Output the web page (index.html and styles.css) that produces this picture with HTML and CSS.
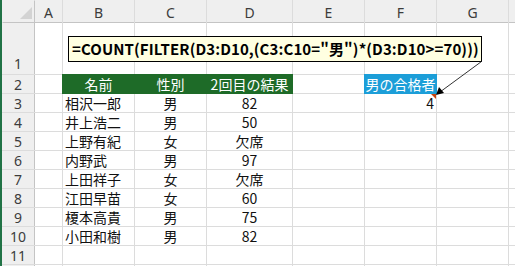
FILE: index.html
```html
<!DOCTYPE html>
<html lang="ja">
<head>
<meta charset="utf-8">
<link rel="stylesheet" href="styles.css">
</head>
<body>
<div class="app">
  <div class="stripe"></div>
  <div class="sheet">
    <div class="hdr corner"><svg width="12" height="12" viewBox="0 0 12 12"><polygon points="12,0 12,12 0,12" fill="#d3d3d3"/></svg></div>
    <div class="hdr col">A</div><div class="hdr col">B</div><div class="hdr col">C</div><div class="hdr col">D</div><div class="hdr col">E</div><div class="hdr col">F</div><div class="hdr col">G</div><div class="hdr col"></div>

    <div class="hdr row tall">1</div><div class="c"></div><div class="c"></div><div class="c"></div><div class="c"></div><div class="c"></div><div class="c"></div><div class="c"></div><div class="c"></div>

    <div class="hdr row">2</div><div class="c"></div><div class="c green ctr">名前</div><div class="c green ctr">性別</div><div class="c green ctr">2回目の結果</div><div class="c"></div><div class="c blue ctr">男の合格者</div><div class="c"></div><div class="c"></div>

    <div class="hdr row">3</div><div class="c"></div><div class="c left">相沢一郎</div><div class="c ctr">男</div><div class="c ctr">82</div><div class="c"></div><div class="c right note">4<span class="tri"></span></div><div class="c"></div><div class="c"></div>

    <div class="hdr row">4</div><div class="c"></div><div class="c left">井上浩二</div><div class="c ctr">男</div><div class="c ctr">50</div><div class="c"></div><div class="c"></div><div class="c"></div><div class="c"></div>

    <div class="hdr row">5</div><div class="c"></div><div class="c left">上野有紀</div><div class="c ctr">女</div><div class="c ctr">欠席</div><div class="c"></div><div class="c"></div><div class="c"></div><div class="c"></div>

    <div class="hdr row">6</div><div class="c"></div><div class="c left">内野武</div><div class="c ctr">男</div><div class="c ctr">97</div><div class="c"></div><div class="c"></div><div class="c"></div><div class="c"></div>

    <div class="hdr row">7</div><div class="c"></div><div class="c left">上田祥子</div><div class="c ctr">女</div><div class="c ctr">欠席</div><div class="c"></div><div class="c"></div><div class="c"></div><div class="c"></div>

    <div class="hdr row">8</div><div class="c"></div><div class="c left">江田早苗</div><div class="c ctr">女</div><div class="c ctr">60</div><div class="c"></div><div class="c"></div><div class="c"></div><div class="c"></div>

    <div class="hdr row">9</div><div class="c"></div><div class="c left">榎本高貴</div><div class="c ctr">男</div><div class="c ctr">75</div><div class="c"></div><div class="c"></div><div class="c"></div><div class="c"></div>

    <div class="hdr row">10</div><div class="c"></div><div class="c left">小田和樹</div><div class="c ctr">男</div><div class="c ctr">82</div><div class="c"></div><div class="c"></div><div class="c"></div><div class="c"></div>

    <div class="hdr row">11</div><div class="c"></div><div class="c"></div><div class="c"></div><div class="c"></div><div class="c"></div><div class="c"></div><div class="c"></div><div class="c"></div>

    <div class="hdr row"></div><div class="c"></div><div class="c"></div><div class="c"></div><div class="c"></div><div class="c"></div><div class="c"></div><div class="c"></div><div class="c"></div>
  </div>
  <div class="formula">=COUNT(FILTER(D3:D10,(C3:C10="男")*(D3:D10&gt;=70)))</div>
  <svg class="arrow" width="515" height="266" viewBox="0 0 515 266">
    <line x1="481.5" y1="61.5" x2="440" y2="92" stroke="#333" stroke-width="1"/>
    <polygon points="436,95 439,87 444,93" fill="#000"/>
  </svg>
</div>
</body>
</html>
```
FILE: styles.css
```css
html, body {
  margin: 0;
  padding: 0;
  background: #ffffff;
}
body {
  width: 515px;
  height: 266px;
  overflow: hidden;
  font-family: "Noto Sans CJK JP", "Noto Sans", sans-serif;
  font-size: 14px;
  color: #111;
}
.app {
  position: relative;
  display: flex;
  width: 515px;
  height: 266px;
  overflow: hidden;
}
.stripe {
  width: 2px;
  flex: none;
  background: #217346;
}
.sheet {
  display: grid;
  grid-template-columns: 32px 27px 71px 71px 85px 71px 71px 71px 8px;
  grid-template-rows: 22px 51px repeat(10, 18px) 10px;
  gap: 1px;
  background: #dcdcdc;
  align-self: flex-start;
}
.hdr {
  background: #efefef;
  color: #3c3c3c;
  font-family: "Noto Sans", "Noto Sans CJK JP", sans-serif;
  font-size: 14px;
  display: flex;
  justify-content: center;
  align-items: center;
  line-height: 1;
}
.col {
  padding-top: 3px;
  box-sizing: border-box;
  box-shadow: 0 1px 0 #c4c4c4;
}
.row {
  box-shadow: 1px 0 0 #c4c4c4;
  padding-top: 1px;
  box-sizing: border-box;
}
.row.tall {
  align-items: flex-end;
  padding-bottom: 3px;
}
.corner {
  justify-content: flex-end;
  align-items: flex-end;
  padding: 0 2px 3px 0;
  box-sizing: border-box;
  box-shadow: 1px 1px 0 #c4c4c4;
}
.corner svg {
  display: block;
}
.c {
  background: #ffffff;
  display: flex;
  align-items: center;
  line-height: 1;
  white-space: nowrap;
  overflow: visible;
  position: relative;
}
.left {
  padding-left: 2px;
}
.ctr {
  justify-content: center;
}
.right {
  justify-content: flex-end;
  padding-right: 2px;
}
.green {
  background: #1e6b28;
  color: #ffffff;
  box-shadow: 0 0 0 1px #1e6b28;
}
.blue {
  background: #1c9ed8;
  color: #ffffff;
  box-shadow: 0 0 0 1px #1c9ed8;
}
.tri {
  position: absolute;
  top: 0;
  right: 0;
  width: 0;
  height: 0;
  border-top: 5px solid #c4420f;
  border-left: 5px solid transparent;
}
.formula {
  position: absolute;
  left: 68px;
  top: 36px;
  width: 414px;
  height: 26px;
  box-sizing: border-box;
  border: 1px solid #000;
  background: #ffffe1;
  font-family: "Noto Sans CJK JP", "Noto Sans", sans-serif;
  font-weight: bold;
  font-size: 15px;
  letter-spacing: 0.1px;
  line-height: 24px;
  padding-left: 3px;
  color: #000;
  white-space: nowrap;
}
.arrow {
  position: absolute;
  left: 0;
  top: 0;
  pointer-events: none;
}
```
